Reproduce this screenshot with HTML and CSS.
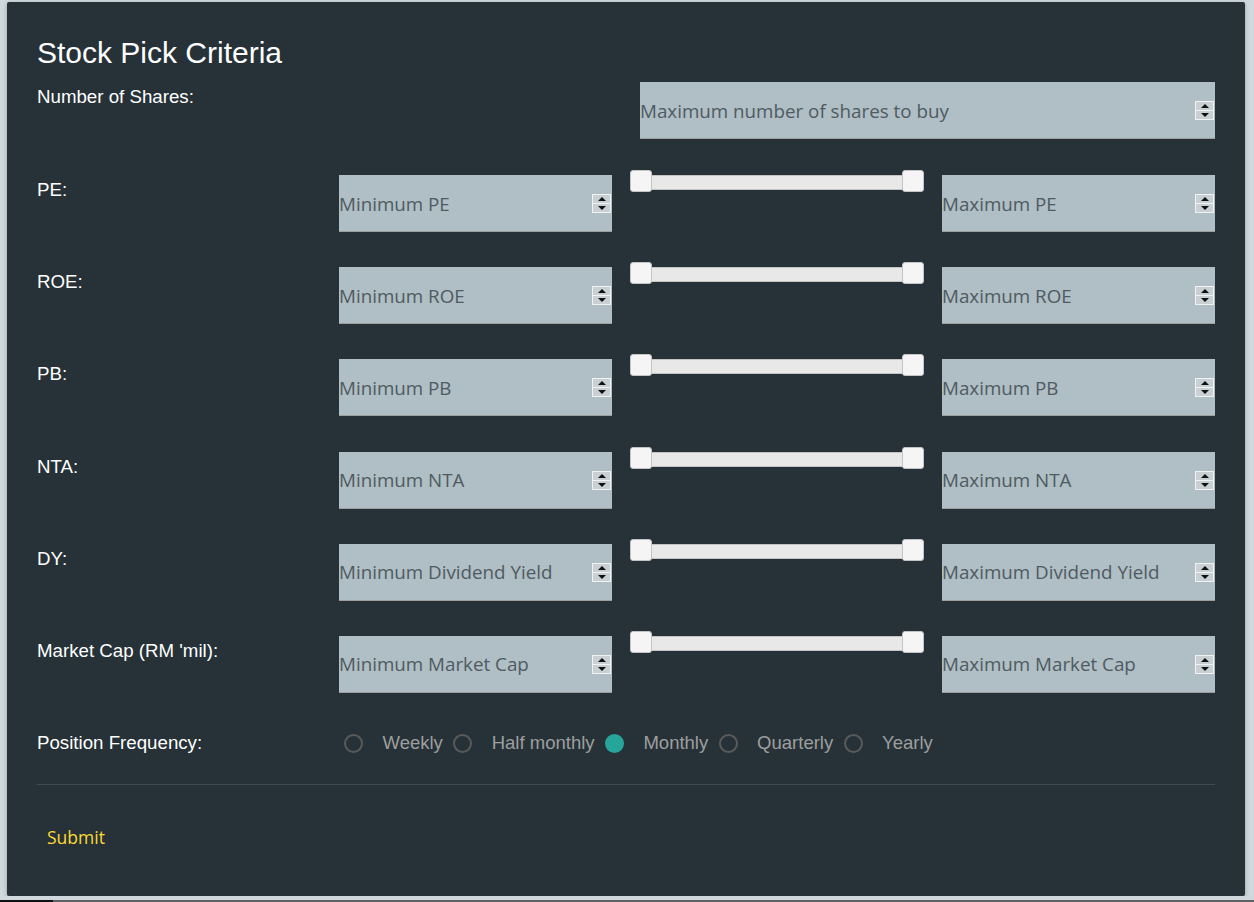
FILE: index.html
```html
<!DOCTYPE html>
<html>
<head>
<meta charset="utf-8">
<title>Stock Pick Criteria</title>
<link rel="stylesheet" href="styles.css">
</head>
<body>
<div class="card">
  <h2 class="title">Stock Pick Criteria</h2>

  <div class="row row-shares">
    <div class="label">Number of Shares:</div>
    <div class="field"><input class="num" type="text" placeholder="Maximum number of shares to buy"><span class="spin"><span class="up"></span><span class="down"></span></span></div>
  </div>

  <div class="row row-range">
    <div class="label">PE:</div>
    <div class="field"><input class="num" type="text" placeholder="Minimum PE"><span class="spin"><span class="up"></span><span class="down"></span></span></div>
    <div class="slider"><div class="track"></div><span class="handle h-left"></span><span class="handle h-right"></span></div>
    <div class="field"><input class="num" type="text" placeholder="Maximum PE"><span class="spin"><span class="up"></span><span class="down"></span></span></div>
  </div>

  <div class="row row-range">
    <div class="label">ROE:</div>
    <div class="field"><input class="num" type="text" placeholder="Minimum ROE"><span class="spin"><span class="up"></span><span class="down"></span></span></div>
    <div class="slider"><div class="track"></div><span class="handle h-left"></span><span class="handle h-right"></span></div>
    <div class="field"><input class="num" type="text" placeholder="Maximum ROE"><span class="spin"><span class="up"></span><span class="down"></span></span></div>
  </div>

  <div class="row row-range">
    <div class="label">PB:</div>
    <div class="field"><input class="num" type="text" placeholder="Minimum PB"><span class="spin"><span class="up"></span><span class="down"></span></span></div>
    <div class="slider"><div class="track"></div><span class="handle h-left"></span><span class="handle h-right"></span></div>
    <div class="field"><input class="num" type="text" placeholder="Maximum PB"><span class="spin"><span class="up"></span><span class="down"></span></span></div>
  </div>

  <div class="row row-range">
    <div class="label">NTA:</div>
    <div class="field"><input class="num" type="text" placeholder="Minimum NTA"><span class="spin"><span class="up"></span><span class="down"></span></span></div>
    <div class="slider"><div class="track"></div><span class="handle h-left"></span><span class="handle h-right"></span></div>
    <div class="field"><input class="num" type="text" placeholder="Maximum NTA"><span class="spin"><span class="up"></span><span class="down"></span></span></div>
  </div>

  <div class="row row-range">
    <div class="label">DY:</div>
    <div class="field"><input class="num" type="text" placeholder="Minimum Dividend Yield"><span class="spin"><span class="up"></span><span class="down"></span></span></div>
    <div class="slider"><div class="track"></div><span class="handle h-left"></span><span class="handle h-right"></span></div>
    <div class="field"><input class="num" type="text" placeholder="Maximum Dividend Yield"><span class="spin"><span class="up"></span><span class="down"></span></span></div>
  </div>

  <div class="row row-range">
    <div class="label">Market Cap (RM 'mil):</div>
    <div class="field"><input class="num" type="text" placeholder="Minimum Market Cap"><span class="spin"><span class="up"></span><span class="down"></span></span></div>
    <div class="slider"><div class="track"></div><span class="handle h-left"></span><span class="handle h-right"></span></div>
    <div class="field"><input class="num" type="text" placeholder="Maximum Market Cap"><span class="spin"><span class="up"></span><span class="down"></span></span></div>
  </div>

  <div class="row row-radio">
    <div class="label">Position Frequency:</div>
    <div class="radios">
      <label class="opt"><span class="circle"></span><span class="opt-text">Weekly</span></label>
      <label class="opt"><span class="circle"></span><span class="opt-text">Half monthly</span></label>
      <label class="opt"><span class="circle checked"></span><span class="opt-text">Monthly</span></label>
      <label class="opt"><span class="circle"></span><span class="opt-text">Quarterly</span></label>
      <label class="opt"><span class="circle"></span><span class="opt-text">Yearly</span></label>
    </div>
  </div>

  <div class="divider"></div>

  <div class="actions">
    <button class="submit" type="button">Submit</button>
  </div>
</div>
<div class="bottom-strip"><span class="strip-dark"></span></div>
</body>
</html>
```

FILE: styles.css
```css
html, body {
  margin: 0;
  padding: 0;
  background: #cfd8dc;
  overflow: hidden;
}

body {
  padding: 2px 9px 0 7px;
  font-family: "Liberation Sans", Arial, sans-serif;
}

.card {
  background: #263238;
  border-radius: 2px;
  height: 894px;
  box-sizing: border-box;
  padding: 33px 30px 0 30px;
  box-shadow: 0 2px 2px rgba(0,0,0,.14), 0 3px 1px -2px rgba(0,0,0,.12), 0 1px 5px rgba(0,0,0,.2);
}

.title {
  margin: 0 0 11px 0;
  font-family: "Liberation Sans", Arial, sans-serif;
  font-weight: normal;
  font-size: 30px;
  line-height: 36px;
  color: #ffffff;
}

.row {
  display: grid;
  align-items: start;
  margin-bottom: 35.2px;
}

.row-shares {
  grid-template-columns: 603px 575px;
  margin-bottom: 36px;
}

.row-range {
  grid-template-columns: 302px 273px 330px 273px;
}

.label {
  color: #ffffff;
  font-size: 18.7px;
  line-height: 22px;
  padding-top: 4px;
}

.field {
  display: flex;
  align-items: center;
  height: 57px;
  box-sizing: border-box;
  background: #b0bec5;
  border-bottom: 1px solid #9e9e9e;
}

.num {
  flex: 1;
  min-width: 0;
  border: none;
  background: transparent;
  outline: none;
  padding: 1px 0 0 0;
  margin: 0;
  font-family: "Open Sans", "Noto Sans", sans-serif;
  font-size: 18.8px;
  color: #4f5b61;
}

.num::placeholder {
  color: #4f5b61;
  opacity: 1;
}

.spin {
  display: flex;
  flex-direction: column;
  width: 19px;
  height: 19px;
  box-sizing: border-box;
  margin-right: 1px;
  margin-top: 1px;
  border: 1px solid #f2f2f2;
  background: #f2f2f2;
  gap: 1px;
}

.spin .up, .spin .down {
  flex: 1;
  background: #c9d0d3;
  position: relative;
}

.spin .up::after, .spin .down::after {
  content: "";
  position: absolute;
  left: 50%;
  top: 50%;
  margin-left: -4px;
  border-left: 4px solid transparent;
  border-right: 4px solid transparent;
}

.spin .up::after {
  margin-top: -2px;
  border-bottom: 4px solid #111;
}

.spin .down::after {
  margin-top: -2px;
  border-top: 4px solid #111;
}

.slider {
  margin: -5px 18px 0 18px;
  height: 22px;
  position: relative;
}

.track {
  margin: 5px 10px 0 10px;
  height: 15px;
  box-sizing: border-box;
  background: #e8e8e8;
  border: 1px solid #c4c4c4;
  border-left: none;
  border-right: none;
}

.handle {
  position: absolute;
  top: 0;
  width: 22px;
  height: 22px;
  box-sizing: border-box;
  background: #f5f5f5;
  border: 1px solid #c4c4c4;
  border-radius: 3px;
}

.h-left { left: 0; }
.h-right { right: 0; }

.row-radio {
  grid-template-columns: 302px 876px;
  align-items: center;
  height: 30px;
  margin-bottom: 0;
}

.row-radio .label {
  padding-top: 0;
}

.radios {
  display: flex;
  align-items: center;
  gap: 10.4px;
  padding-left: 5px;
}

.opt {
  display: flex;
  align-items: center;
  gap: 19.5px;
  color: #9e9e9e;
  font-size: 18.5px;
  line-height: 22px;
}

.circle {
  width: 19px;
  height: 19px;
  box-sizing: border-box;
  border: 2px solid #5a5a5a;
  border-radius: 50%;
}

.circle.checked {
  border-color: #26a69a;
  background: #26a69a;
}

.divider {
  height: 1px;
  background: #3e4a50;
  margin-top: 26px;
}

.actions {
  padding-top: 40px;
}

.submit {
  background: transparent;
  border: none;
  padding: 0 10px;
  margin: 0;
  font-family: "Open Sans", "Noto Sans", sans-serif;
  font-size: 17.5px;
  line-height: 24px;
  color: #fdd835;
  cursor: pointer;
}

.bottom-strip {
  position: fixed;
  left: 0;
  right: 0;
  bottom: 0;
  height: 2px;
  background: #5f6163;
}

.strip-dark {
  display: block;
  width: 53px;
  height: 2px;
  background: #111111;
}
```
